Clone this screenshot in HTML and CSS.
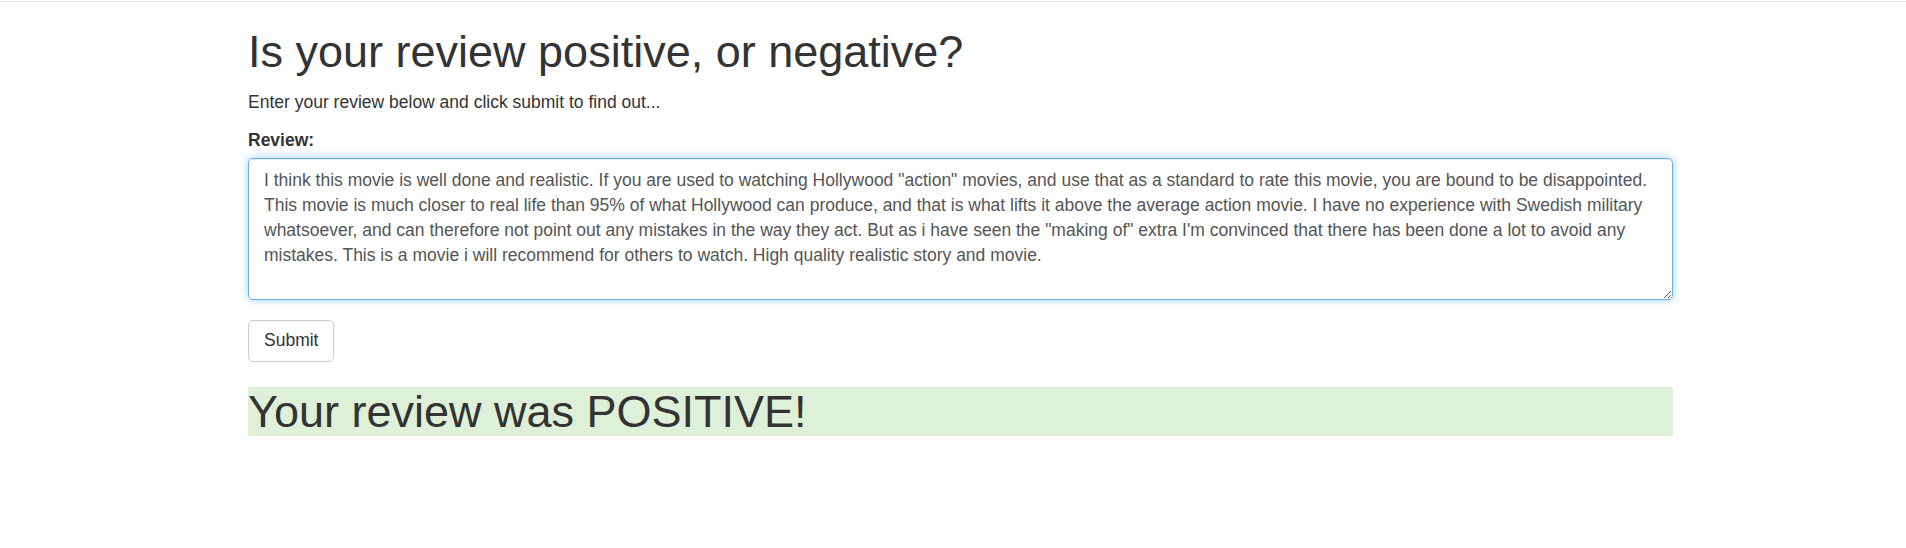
FILE: index.html
```html
<!DOCTYPE html>
<html lang="en">
<head>
<meta charset="utf-8">
<title>Review sentiment</title>
<link rel="stylesheet" href="styles.css">
</head>
<body>
<div class="topline"></div>
<div class="container">
  <h1 class="title">Is your review positive, or negative?</h1>
  <p class="lead-text">Enter your review below and click submit to find out...</p>
  <form class="review-form">
    <div class="form-group">
      <label class="field-label" for="review">Review:</label>
      <textarea id="review" class="form-control is-focused" rows="5" spellcheck="false">I think this movie is well done and realistic. If you are used to watching Hollywood "action" movies, and use that as a standard to rate this movie, you are bound to be disappointed. This movie is much closer to real life than 95% of what Hollywood can produce, and that is what lifts it above the average action movie. I have no experience with Swedish military whatsoever, and can therefore not point out any mistakes in the way they act. But as i have seen the "making of" extra I'm convinced that there has been done a lot to avoid any mistakes. This is a movie i will recommend for others to watch. High quality realistic story and movie.</textarea>
    </div>
    <button type="button" class="btn">Submit</button>
  </form>
  <h1 class="result">Your review was POSITIVE!</h1>
</div>
</body>
</html>
```
FILE: styles.css
```css
* { box-sizing: border-box; }
html, body { margin: 0; padding: 0; }
body {
  font-family: "Liberation Sans", Arial, Helvetica, sans-serif;
  font-size: 17.5px;
  line-height: 25px;
  color: #333;
  background: #fff;
}
.topline {
  height: 3px;
  border-bottom: 1px solid #e3e3e3;
  margin-top: -1px;
}
.container {
  width: 1425px;
  margin-left: 248px;
}
.title, .result {
  font-family: inherit;
  font-weight: 500;
  font-size: 45px;
  line-height: 49.5px;
  margin: 25px 0 12.5px;
}
.lead-text {
  margin: 0 0 12.5px;
  padding-top: 1px;
}
.review-form { margin: 0; }
.form-group { margin-bottom: 20px; }
.field-label {
  display: inline-block;
  font-weight: 700;
  margin-bottom: 5px;
}
.form-control {
  display: block;
  width: 100%;
  height: 142px;
  padding: 9px 15px 6px;
  font-family: inherit;
  font-size: 17.5px;
  line-height: 25px;
  color: #555;
  background: #fff;
  border: 1px solid #ccc;
  border-radius: 5px;
  resize: vertical;
  outline: none;
  box-shadow: inset 0 1px 1px rgba(0,0,0,.075);
}
.form-control.is-focused {
  border-color: #66afe9;
  box-shadow: inset 0 1px 1px rgba(0,0,0,.075), 0 0 10px rgba(102,175,233,.6);
}
.btn {
  display: inline-block;
  padding: 7.5px 15px;
  font-family: inherit;
  font-size: 17.5px;
  line-height: 25px;
  color: #333;
  background: #fff;
  border: 1px solid #ccc;
  border-radius: 5px;
  cursor: pointer;
}
.result {
  background: #dff0d8;
  margin-bottom: 0;
}
```
